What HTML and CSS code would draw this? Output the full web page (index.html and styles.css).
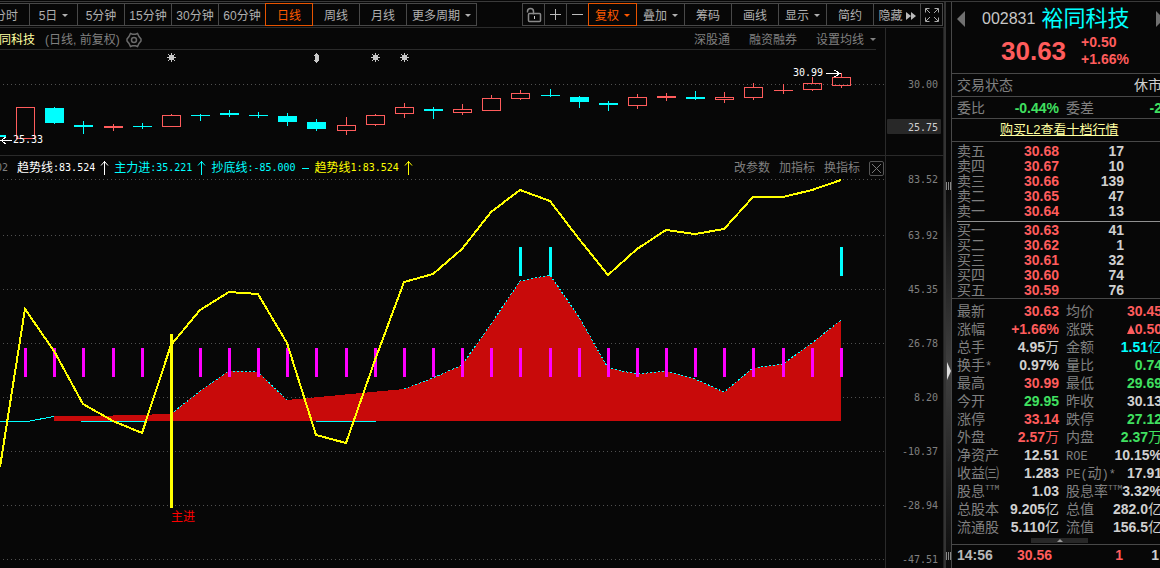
FILE: index.html
```html
<!DOCTYPE html>
<html lang="zh-CN">

<head>
  <meta charset="UTF-8">
  <title>裕同科技 002831</title>
  <link rel="stylesheet" href="styles.css">
</head>

<body>

  <div class="app">

    <main class="chart">
      <nav class="toolbar">
        <div class="group periods">
          <button>分时</button>
          <button class="drop">5日<i class="caret"></i></button>
          <button>5分钟</button>
          <button>15分钟</button>
          <button>30分钟</button>
          <button>60分钟</button>
          <button class="active">日线</button>
          <button>周线</button>
          <button>月线</button>
          <button class="wide">更多周期<i class="caret"></i></button>
        </div>
        <div class="group tools">
          <button class="icon" aria-label="解锁">
            <svg width="16" height="16" fill="none" stroke="#8a8a8a"><path d="M1.5 5.5v-1q0-3 3-3t3 3v3M3.500 6.500h10q1 0 1 1v6q0 1-1 1h-10q-1 0-1-1v-6q0-1 1-1z" stroke-width="1.500"/><path d="M8.500 9v3" stroke="#ccc"/></svg>
          </button>
          <button class="icon" aria-label="放大">
            <svg width="12" height="12" stroke="#bbb"><path d="M0 5.500h11M5.500 0v11"/></svg>
          </button>
          <button class="icon" aria-label="缩小">
            <svg width="12" height="12" stroke="#bbb"><path d="M0 5.500h11"/></svg>
          </button>
          <button class="drop active">复权<i class="caret"></i></button>
          <button class="drop">叠加<i class="caret"></i></button>
          <button>筹码</button>
          <button>画线</button>
          <button class="drop">显示<i class="caret"></i></button>
          <button>简约</button>
          <button>隐藏<svg class="forward" width="10" height="8" fill="#bbb"><path d="M0 0l5 4-5 4zM5 0l5 4-5 4z"/></svg></button>
          <button class="icon" aria-label="全屏">
            <svg width="14" height="14" fill="none" stroke="#aaa"><path d="M.5 4.500v-4h4M9.500.5h4v4M13.500 9.500v4h-4M4.500 13.500h-4v-4M1 1l4 4M13 1l-4 4M13 13l-4-4M1 13l4-4"/></svg>
          </button>
        </div>
      </nav>

      <div class="panes">
        <section class="price-pane">
          <header class="info">
            <strong>裕同科技</strong>
            <span class="mode">(日线, 前复权)</span>
            <button class="plain gear" aria-label="设置">
              <svg width="16" height="16" fill="none" stroke="#6a6a6a" stroke-width="1.500"><path d="M4.500 1.500l2 .7h3l2-.7 1.500 3 2 2.500v2l-2 2.500-1.500 3-2-.7h-3l-2 .7-1.500-3-2-2.500v-2l2-2.500z"/><circle cx="8" cy="8" r="2.500"/></svg>
            </button>
            <div class="links">
              <a href="#">深股通</a>
              <a href="#">融资融券</a>
              <button class="plain">设置均线<i class="caret"></i></button>
            </div>
          </header>

          <svg class="candles" shape-rendering="crispEdges">
            <g transform="translate(0 -50)">
              <path class="grid" d="M3 84.500H886"/>

              <!-- event marks -->
              <g class="marks">
                <path id="star" d="M171 53h1v2h1l2-1-1 2v1h2v1h-2v1l1 2-2-1h-1v2h-1v-2h-1l-2 1 1-2v-1h-2v-1h2v-1l-1-2 2 1h1z"/>
                <path d="M316.500 53l3 3h-1v4h1l-3 3-3-3h1v-4h-1z"/>
                <use href="#star" x="204"/>
                <use href="#star" x="233"/>
              </g>

              <!-- falling days -->
              <path class="down-wick" d="M54.500 107v17M83.500 121v13M142.500 123v6M200.500 114v7M229.500 110v7M258.500 112v6M287.500 113v13M316.500 119v12M433.500 107v12M550.500 89v8M579.500 96v12M608.500 101v10M695.500 91v9"/>
              <path class="down" d="M0 135h6v2H0zM45 108h19v15h-19zM74 125h19v2h-19zM133 126h19v1h-19zM191 115h19v1h-19zM220 113h19v2h-19zM249 115h19v1h-19zM278 116h19v6h-19zM307 122h19v7h-19zM424 109h19v2h-19zM541 95h19v1h-19zM570 97h19v5h-19zM599 103h19v2h-19zM686 97h19v2h-19z"/>

              <!-- rising days -->
              <path class="up" d="M16.500 107.500h18v31h-18zM104.500 126.500h18v1h-18zM113.500 124v7M162.500 115.500h18v11h-18zM171.500 114v1M337.500 125.500h18v5h-18zM346.500 117v8M346.500 131v4M366.500 115.500h18v9h-18zM375.500 114v1M375.500 125v1M395.500 107.500h18v6h-18zM404.500 103v4M404.500 114v4M453.500 109.500h18v3h-18zM462.500 104v5M462.500 113v2M482.500 98.500h18v12h-18zM491.500 95v3M511.500 93.500h18v5h-18zM520.500 90v3M520.500 99v1M628.500 97.500h18v8h-18zM637.500 94v3M637.500 106v3M657.500 96.500h18v1h-18zM666.500 93v8M715.500 97.500h18v2h-18zM724.500 92v5M724.500 100v3M744.500 87.500h18v10h-18zM753.500 83v4M753.500 98v2M774 90.500h19M783.500 84v10M803.500 83.500h18v6h-18zM812.500 77v6M812.500 90v1M832.500 77.500h18v8h-18zM841.500 73v4M841.500 86v2"/>

              <path class="pointer" d="M12 140.500H1M6 137l-5 3.500 5 3.500M826 73.500h13M834 70l6 3.500-6 3.500"/>
              <text class="num note" x="13" y="143">25.33</text>
              <text class="num note" x="793" y="76">30.99</text>
            </g>
          </svg>
        </section>

        <svg class="axis price-axis">
          <text class="num" x="52" y="60">30.00</text>
          <rect x="1" y="91" width="54" height="15" rx="1"/>
          <text class="num current" x="52" y="103">25.75</text>
        </svg>

        <section class="indicator-pane">
          <header class="legend">
            <span class="num params">02</span>
            <span class="white">趋势线<span class="num">:83.524</span><svg class="arrow"><use href="#up-arrow"/></svg></span>
            <span class="cyan">主力进<span class="num">:35.221</span><svg class="arrow"><use href="#up-arrow"/></svg></span>
            <span class="cyan">抄底线<span class="num">:-85.000</span><svg class="arrow"><path d="M1 7.500h7"/></svg></span>
            <span class="yellow">趋势线<span class="num">1:83.524</span><svg class="arrow"><use href="#up-arrow"/></svg></span>
            <div class="actions">
              <button class="plain">改参数</button>
              <button class="plain">加指标</button>
              <button class="plain">换指标</button>
              <button class="close" aria-label="关闭"><svg width="9" height="9" stroke="#777"><path d="M0 0l9 9M9 0l-9 9"/></svg></button>
            </div>
          </header>

          <svg class="plot" shape-rendering="crispEdges">
            <defs>
              <path id="up-arrow" d="M4.500 0v14M1 4.500l3.500-4 3.500 4"/>
            </defs>
            <g transform="translate(0 -178)">
              <path class="grid" d="M3 179.500H886M3 235.500H886M3 289.500H886M3 343.500H886M3 397.500H886M3 451.500H886M3 505.500H886M3 559.500H886"/>

              <path class="area" d="M54 421V416L113 415.500 171 414 200 391 229 371 258 372 287 400 404 389 433 378 462 365 491 324 520 281 550 275 579 317 608 368 637 374 666 371 695 379 724 392 753 368 783 364 812 343 841 320V421z"/>
              <path class="flow" d="M0 421.500H27L54 416.500M81 421.500H146M316 421.500H376"/>
              <path class="flow dashed" d="M171 414L200 391 229 371 258 372 287 400M404 389L433 378 462 365 491 324 520 281 550 275 579 317 608 368 637 374 666 371 695 379 724 392 753 368 783 364 812 343 841 320"/>

              <path class="bars magenta" d="M25.500 348v29M54.500 348v29M83.500 348v29M113.500 348v29M142.500 348v29M200.500 348v29M229.500 348v29M258.500 348v29M287.500 348v29M316.500 348v29M346.500 348v29M375.500 348v29M404.500 348v29M433.500 348v29M462.500 348v29M491.500 348v29M520.500 348v29M550.500 348v29M579.500 348v29M608.500 348v29M637.500 348v29M666.500 348v29M695.500 348v29M724.500 348v29M753.500 348v29M783.500 348v29M812.500 348v29M841.500 348v29"/>
              <path class="bars bottom" d="M520.500 247v29M550.500 247v29M841.500 247v29"/>

              <polyline class="trend" points="0,467 25,309 54,351 83,404 113,421 142,433 171,345 200,310 229,292 258,294 287,343 316,435 346,443 375,360 404,282 433,274 462,249 491,212 520,190 550,201 579,239 608,275 637,249 666,230 695,234 724,229 753,197 783,197 812,190 841,180"/>
              <path class="bars entry" d="M171.500 334v174"/>
              <text class="entry-label" x="171" y="521">主进</text>
            </g>
          </svg>
        </section>

        <svg class="axis indicator-axis">
          <text class="num" x="52" y="27">83.52</text>
          <text class="num" x="52" y="83">63.92</text>
          <text class="num" x="52" y="137">45.35</text>
          <text class="num" x="52" y="191">26.78</text>
          <text class="num" x="52" y="245">8.20</text>
          <text class="num" x="52" y="299">-10.37</text>
          <text class="num" x="52" y="353">-28.94</text>
          <text class="num" x="52" y="407">-47.51</text>
        </svg>
      </div>
    </main>

    <div class="splitter">
      <i class="grip"></i>
      <i class="fold"></i>
      <i class="grip"></i>
    </div>

    <aside class="quote">
      <div class="quote-inner">
        <header class="stock">
          <div class="stock-name">
            <button class="plain prev" aria-label="上一只"></button>
            <span class="code">002831</span>
            <h1>裕同科技</h1>
            <button class="plain next" aria-label="下一只"></button>
          </div>
          <div class="stock-price red">
            <strong>30.63</strong>
            <div class="change">+0.50<br>+1.66%</div>
          </div>
        </header>

        <div class="row status"><span>交易状态</span><span class="light">休市</span></div>

        <table class="row pairs ratio">
          <tr><th>委比</th><td class="green">-0.44%</td><th>委差</th><td class="green">-2</td></tr>
        </table>

        <div class="row promo"><a href="#">购买L2查看十档行情</a></div>

        <table class="levels sell">
          <tr><th>卖五</th><td>30.68</td><td>17</td><td></td></tr>
          <tr><th>卖四</th><td>30.67</td><td>10</td><td></td></tr>
          <tr><th>卖三</th><td>30.66</td><td>139</td><td></td></tr>
          <tr><th>卖二</th><td>30.65</td><td>47</td><td></td></tr>
          <tr><th>卖一</th><td>30.64</td><td>13</td><td></td></tr>
        </table>
        <table class="levels buy">
          <tr><th>买一</th><td>30.63</td><td>41</td><td></td></tr>
          <tr><th>买二</th><td>30.62</td><td>1</td><td></td></tr>
          <tr><th>买三</th><td>30.61</td><td>32</td><td></td></tr>
          <tr><th>买四</th><td>30.60</td><td>74</td><td></td></tr>
          <tr><th>买五</th><td>30.59</td><td>76</td><td></td></tr>
        </table>

        <div class="details">
          <table class="pairs">
            <tr><th>最新</th><td class="red">30.63</td><th>均价</th><td class="red">30.45</td></tr>
            <tr><th>涨幅</th><td class="red">+1.66%</td><th>涨跌</th><td class="red"><i class="rise"></i>0.50</td></tr>
            <tr><th>总手</th><td>4.95<span class="unit">万</span></td><th>金额</th><td class="cyan">1.51<span class="unit">亿</span></td></tr>
            <tr><th>换手<span class="latin">*</span></th><td>0.97%</td><th>量比</th><td class="green">0.74</td></tr>
            <tr><th>最高</th><td class="red">30.99</td><th>最低</th><td class="green">29.69</td></tr>
            <tr><th>今开</th><td class="green">29.95</td><th>昨收</th><td>30.13</td></tr>
            <tr><th>涨停</th><td class="red">33.14</td><th>跌停</th><td class="green">27.12</td></tr>
            <tr><th>外盘</th><td class="red">2.57<span class="unit">万</span></td><th>内盘</th><td class="green">2.37<span class="unit">万</span></td></tr>
            <tr><th>净资产</th><td>12.51</td><th><span class="latin">ROE</span></th><td>10.15%</td></tr>
            <tr><th>收益㈢</th><td>1.283</td><th><span class="latin">PE(</span>动<span class="latin">)*</span></th><td>17.91</td></tr>
            <tr><th>股息<sup>TTM</sup></th><td>1.03</td><th>股息率<sup>TTM</sup></th><td>3.32%</td></tr>
            <tr><th>总股本</th><td>9.205<span class="unit">亿</span></td><th>总值</th><td>282.0<span class="unit">亿</span></td></tr>
            <tr><th>流通股</th><td>5.110<span class="unit">亿</span></td><th>流值</th><td>156.5<span class="unit">亿</span></td></tr>
          </table>
          <button class="collapse" aria-label="收起"></button>
        </div>

        <table class="ticks">
          <tr><th>14:56</th><td class="red">30.56</td><td class="red">1</td><td>1</td><td></td></tr>
        </table>
      </div>
    </aside>

  </div>

</body>

</html>
```
FILE: styles.css
```css
* {
  box-sizing: border-box;
}

body {
  margin: 0;
  background: #070707;
  color: #808080;
  font: 12px/16px "Liberation Sans", "Noto Sans CJK SC", sans-serif;
  overflow: hidden;
}

.app {
  display: flex;
  height: calc(100vh - 1px);
  margin-top: 1px;
  border-top: 1px solid #3a3a3a;
}

button {
  padding: 0;
  border: 0;
  background: none;
  color: inherit;
  font: inherit;
  white-space: nowrap;
  cursor: pointer;
}

a {
  color: inherit;
  text-decoration: none;
}

svg {
  display: block;
}

.num {
  font-family: "DejaVu Sans Mono", monospace;
  font-size: 10px;
}

.red { color: #ff5c5c; }
.green { color: #40e060; }
.cyan { color: #00ffff; }
.yellow { color: #ffff00; }
.white { color: #ffffff; }
.light { color: #d0d0d0; }

.caret {
  display: inline-block;
  margin-left: 6px;
  border: 3px solid transparent;
  border-top-color: currentColor;
  border-bottom: 0;
  vertical-align: 3px;
}

/* toolbar */
.chart {
  display: flex;
  flex-direction: column;
  flex: 1;
  min-width: 0;
  overflow: hidden;
}

.toolbar {
  display: flex;
  justify-content: space-between;
  height: 26px;
  padding: 1px 1px 0 0;
  border-bottom: 1px solid #2a2a2a;
}

.group {
  display: flex;
  height: 23px;
  color: #b0b0b0;
}

.periods {
  margin-left: -18px;
}

.group button {
  display: flex;
  align-items: center;
  justify-content: center;
  width: 48px;
  margin-right: -1px;
  padding-top: 2px;
  border: 1px solid #484848;
}

.group .drop {
  width: 49px;
}

.group .wide {
  width: 71px;
}

.group .icon {
  width: 23px;
  padding-top: 0;
}

.group .active {
  position: relative;
  border-color: #e85400;
  color: #ff5a00;
}

.group .caret {
  margin-left: 5px;
}

.tools {
  padding-right: 1px;
}

.forward {
  margin-left: 3px;
}

/* chart panes */
.panes {
  display: grid;
  grid-template-columns: 1fr 59px;
  grid-template-rows: 128px 1fr;
  flex: 1;
  min-height: 0;
}

.price-pane,
.price-axis {
  border-bottom: 1px solid #2a2a2a;
}

.price-pane,
.indicator-pane {
  display: flex;
  flex-direction: column;
  min-width: 0;
  overflow: hidden;
}

.info {
  display: flex;
  align-items: center;
  height: 22px;
  margin: 0 9px 0 -13px;
  padding-top: 2px;
  border-bottom: 1px solid #2a2a2a;
}

.info strong {
  color: #ffffa0;
  font-weight: normal;
}

.mode {
  margin-left: 10px;
}

.gear {
  margin-left: 6px;
}

.links {
  display: flex;
  gap: 19px;
  margin-left: auto;
}

.candles,
.plot {
  width: 100%;
  flex: 1;
  min-height: 0;
}

.grid {
  stroke: #505050;
  stroke-dasharray: 1 3;
}

.marks {
  fill: #c8c8c8;
}

.down { fill: #00ffff; }
.down-wick { stroke: #00ffff; }

.up {
  fill: none;
  stroke: #ff5c5c;
}

.pointer {
  fill: none;
  stroke: #ffffff;
}

.note {
  fill: #ffffff;
}

.axis {
  width: 100%;
  height: 100%;
  border-left: 1px solid #2a2a2a;
  border-right: 1px solid #222222;
  fill: #808080;
  text-anchor: end;
}

.axis rect {
  fill: #282828;
}

.axis .current {
  fill: #d0d0d0;
}

/* indicator */
.legend {
  display: flex;
  align-items: center;
  height: 22px;
  margin-left: -4px;
  padding: 2px 1px 0 0;
  white-space: nowrap;
}

.legend > span {
  display: flex;
  align-items: center;
}

.params {
  margin-right: 9px;
}

.arrow {
  width: 9px;
  height: 15px;
  margin: 0 5px;
  fill: none;
  stroke: currentColor;
}

.actions {
  display: flex;
  align-items: center;
  gap: 9px;
  margin-left: auto;
}

.close {
  display: grid;
  place-items: center;
  width: 15px;
  height: 15px;
  border: 1px solid #555555;
  border-radius: 2px;
}

.area {
  fill: #c80a0a;
}

.flow {
  fill: none;
  stroke: #00ffff;
}

.dashed {
  stroke-dasharray: 2 2;
}

.bars {
  stroke-width: 3px;
}

.magenta { stroke: #ff00ff; }
.bottom { stroke: #00ffff; }
.entry { stroke: #ffff00; }

.trend {
  fill: none;
  stroke: #ffff00;
  stroke-width: 2px;
}

.entry-label {
  fill: #ff0000;
}

/* splitter */
.splitter {
  display: flex;
  flex-direction: column;
  align-items: center;
  justify-content: space-between;
  flex: none;
  width: 7px;
  padding: 180px 0 8px;
  border-left: 2px solid #333333;
  background: linear-gradient(#070707 30%, #404040 65%, #0c0c0c);
}

.grip {
  width: 5px;
  height: 8px;
  background: repeating-linear-gradient(90deg, #888888 0 1px, transparent 1px 2px);
}

.fold {
  border: 9px solid transparent;
  border-left: 4px solid #dddddd;
  border-right: 0;
}

/* quote panel */
.quote {
  flex: 0 0 209px;
  border-left: 1px solid #484848;
  overflow: hidden;
  font-size: 14px;
}

.quote-inner {
  width: 212px;
}

.stock {
  height: 72px;
  padding: 4px 0 0 5px;
  border-bottom: 1px solid #484848;
}

.stock-name {
  display: flex;
  align-items: center;
  height: 26px;
}

.prev,
.next {
  border: 8px solid transparent;
}

.prev {
  border-right-color: #707070;
  border-left: 0;
}

.next {
  margin-left: auto;
  border-left-color: #707070;
  border-right: 0;
}

.code {
  margin: 0 6px 0 17px;
  color: #c8c8c8;
  font-size: 16px;
}

.stock h1 {
  margin: 0;
  color: #00ffff;
  font-size: 22px;
  font-weight: normal;
}

.stock-price {
  display: flex;
  align-items: center;
  gap: 15px;
  padding: 2px 0 0 44px;
  font-weight: bold;
}

.stock-price strong {
  font-size: 26px;
}

.change {
  line-height: 17px;
}

.row {
  height: 23px;
  border-bottom: 1px solid #484848;
  line-height: 22px;
}

.status {
  display: flex;
  justify-content: space-between;
  padding: 0 2px 0 5px;
}

.promo {
  padding-left: 48px;
  font-size: 13px;
}

.promo a {
  color: #ffffa0;
  text-decoration: underline;
}

table {
  width: 100%;
  border-spacing: 0;
  table-layout: fixed;
}

th,
td {
  padding: 0;
  white-space: nowrap;
}

th {
  font-weight: normal;
  text-align: left;
}

td {
  font-weight: bold;
  text-align: right;
}

.pairs td,
.levels td,
.ticks td {
  color: #d0d0d0;
}

.pairs {
  padding: 0 2px 0 5px;
  line-height: 18px;
}

.pairs th:nth-child(1) { width: 44px; }
.pairs td:nth-child(2) { width: 58px; }
.pairs th:nth-child(3) { width: 49px; padding-left: 7px; }

.pairs td.red,
.ticks td.red { color: #ff5c5c; }
.pairs td.green { color: #40e060; }
.pairs td.cyan { color: #00ffff; }

.ratio {
  height: 22px;
  line-height: 20px;
}

.levels {
  line-height: 15px;
}

.levels th { width: 50px; }
.levels td:nth-child(2) { width: 52px; }
.levels td:nth-child(3) { width: 65px; }

.levels td:nth-child(2) {
  color: #ff5c5c;
}

.sell {
  margin-left: 5px;
  padding: 2px 0;
  border-bottom: 1px solid #909090;
}

.buy {
  padding: 1px 0 0 5px;
  border-bottom: 1px solid #484848;
}

.details {
  padding-top: 3px;
  border-bottom: 1px solid #484848;
}

.unit {
  font-weight: normal;
}

.latin {
  font-family: "Liberation Mono", monospace;
  font-size: 12px;
  line-height: 12px;
}

sup {
  font: 8px/8px "Liberation Mono", monospace;
  vertical-align: 6px;
}

.rise {
  display: inline-block;
  border: 4px solid transparent;
  border-bottom: 9px solid currentColor;
  border-top: 0;
}

.collapse {
  display: grid;
  place-items: center;
  width: 57px;
  height: 5px;
  margin: 2px 0 1px 79px;
  background: #282828;
}

.collapse::before {
  content: "";
  border: 3px solid transparent;
  border-bottom-color: #999999;
  border-top: 0;
}

.ticks {
  padding-left: 5px;
  line-height: 20px;
}

.ticks th {
  width: 60px;
  color: #b8b8b8;
  font-weight: bold;
}

.ticks td:nth-child(2) { width: 35px; }
.ticks td:nth-child(3) { width: 71px; }
.ticks td:nth-child(4) { width: 36px; }
```
